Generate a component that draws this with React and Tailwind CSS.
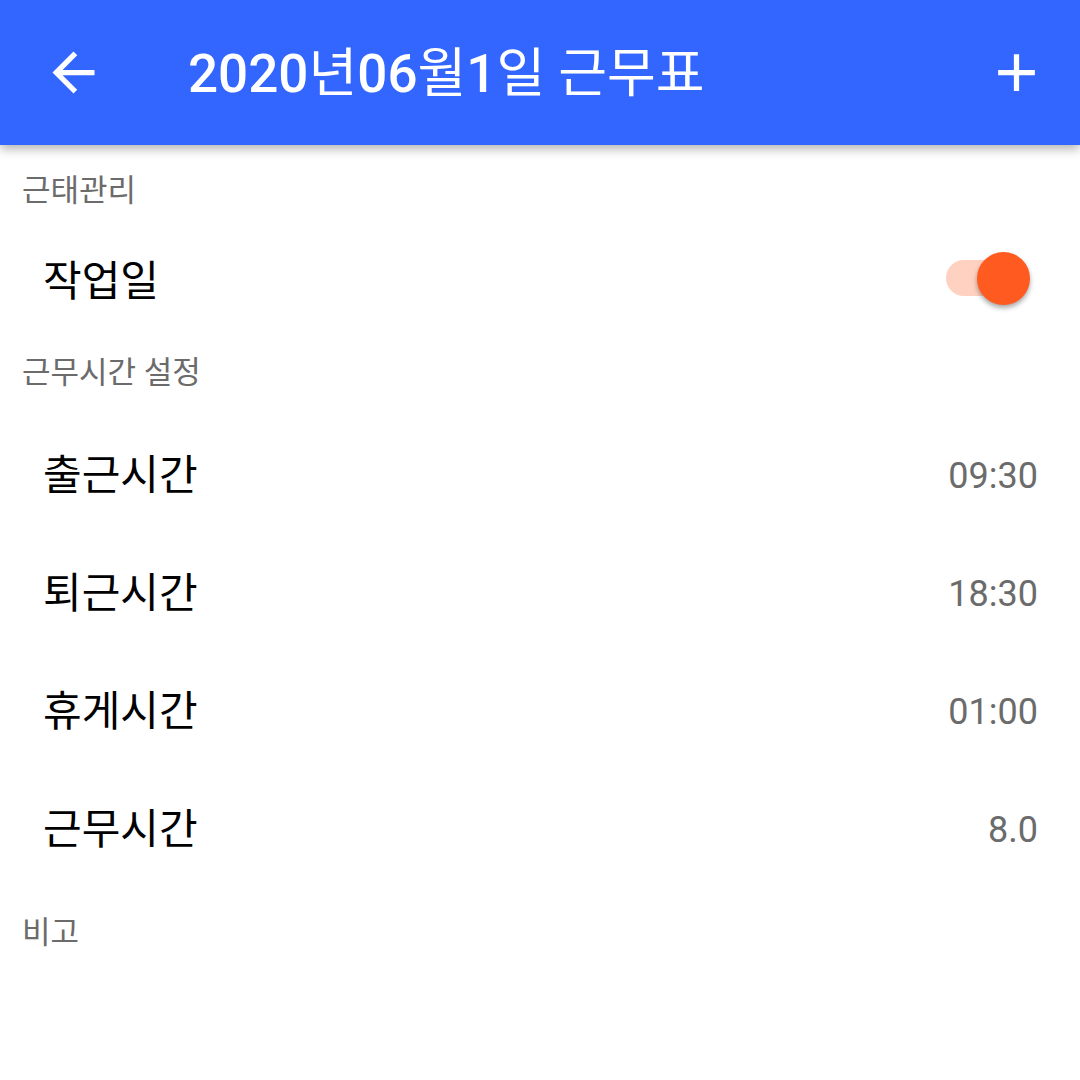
import React from 'react';

const font = { fontFamily: 'Roboto, "Noto Sans CJK KR", sans-serif' };

function SectionLabel({ children }) {
  return (
    <div className="h-[84px] flex items-center pl-[22px] pt-[6px] text-[31px] leading-none text-[#6b6b6b]">{children}</div>
  );
}

function TimeRow({ label, value }) {
  return (
    <div className="h-[118px] flex items-center justify-between pl-[43px] pr-[42px]">
      <span className="pt-[12px] text-[42px] leading-none text-black">{label}</span>
      <span className="pt-[12px] text-[36px] leading-none text-[#6b6b6b]">{value}</span>
    </div>
  );
}

export default function App() {
  return (
    <div className="w-[1080px] h-[1080px] bg-white overflow-hidden" style={font}>
      <header className="relative z-10 h-[145px] bg-[#3366ff] flex items-center shadow-[0_4px_10px_rgba(0,0,0,0.3)]">
        <svg viewBox="0 0 24 24" className="w-[63px] h-[63px] ml-[42px] fill-white">
          <path d="M20 11H7.83l5.59-5.59L12 4l-8 8 8 8 1.41-1.41L7.83 13H20v-2z" />
        </svg>
        <h1 className="ml-[83px] pt-[4px] text-[53px] leading-none font-medium text-white flex-1">
          2020<span className="font-normal">년</span>06<span className="font-normal">월</span>1<span className="font-normal">일 근무표</span>
        </h1>
        <svg viewBox="0 0 24 24" className="w-[63px] h-[63px] mr-[32px] fill-white">
          <path d="M19 13h-6v6h-2v-6H5v-2h6V5h2v6h6v2z" />
        </svg>
      </header>

      <SectionLabel>근태관리</SectionLabel>
      <div className="h-[98px] flex items-center justify-between pl-[43px] pr-[50px]">
        <span className="pt-[8px] text-[42px] leading-none text-black">작업일</span>
        <div className="relative w-[84px] h-[36px] flex items-center">
          <div className="absolute left-0 right-[26px] h-[36px] rounded-full bg-[#ffd1c0]" />
          <div className="absolute right-0 w-[53px] h-[53px] rounded-full bg-[#ff5a1f] shadow-[0_3px_5px_rgba(0,0,0,0.35)]" />
        </div>
      </div>

      <SectionLabel>근무시간 설정</SectionLabel>
      <TimeRow label="출근시간" value="09:30" />
      <TimeRow label="퇴근시간" value="18:30" />
      <TimeRow label="휴게시간" value="01:00" />
      <TimeRow label="근무시간" value="8.0" />
      <div className="mt-[4px]">
        <SectionLabel>비고</SectionLabel>
      </div>
    </div>
  );
}
